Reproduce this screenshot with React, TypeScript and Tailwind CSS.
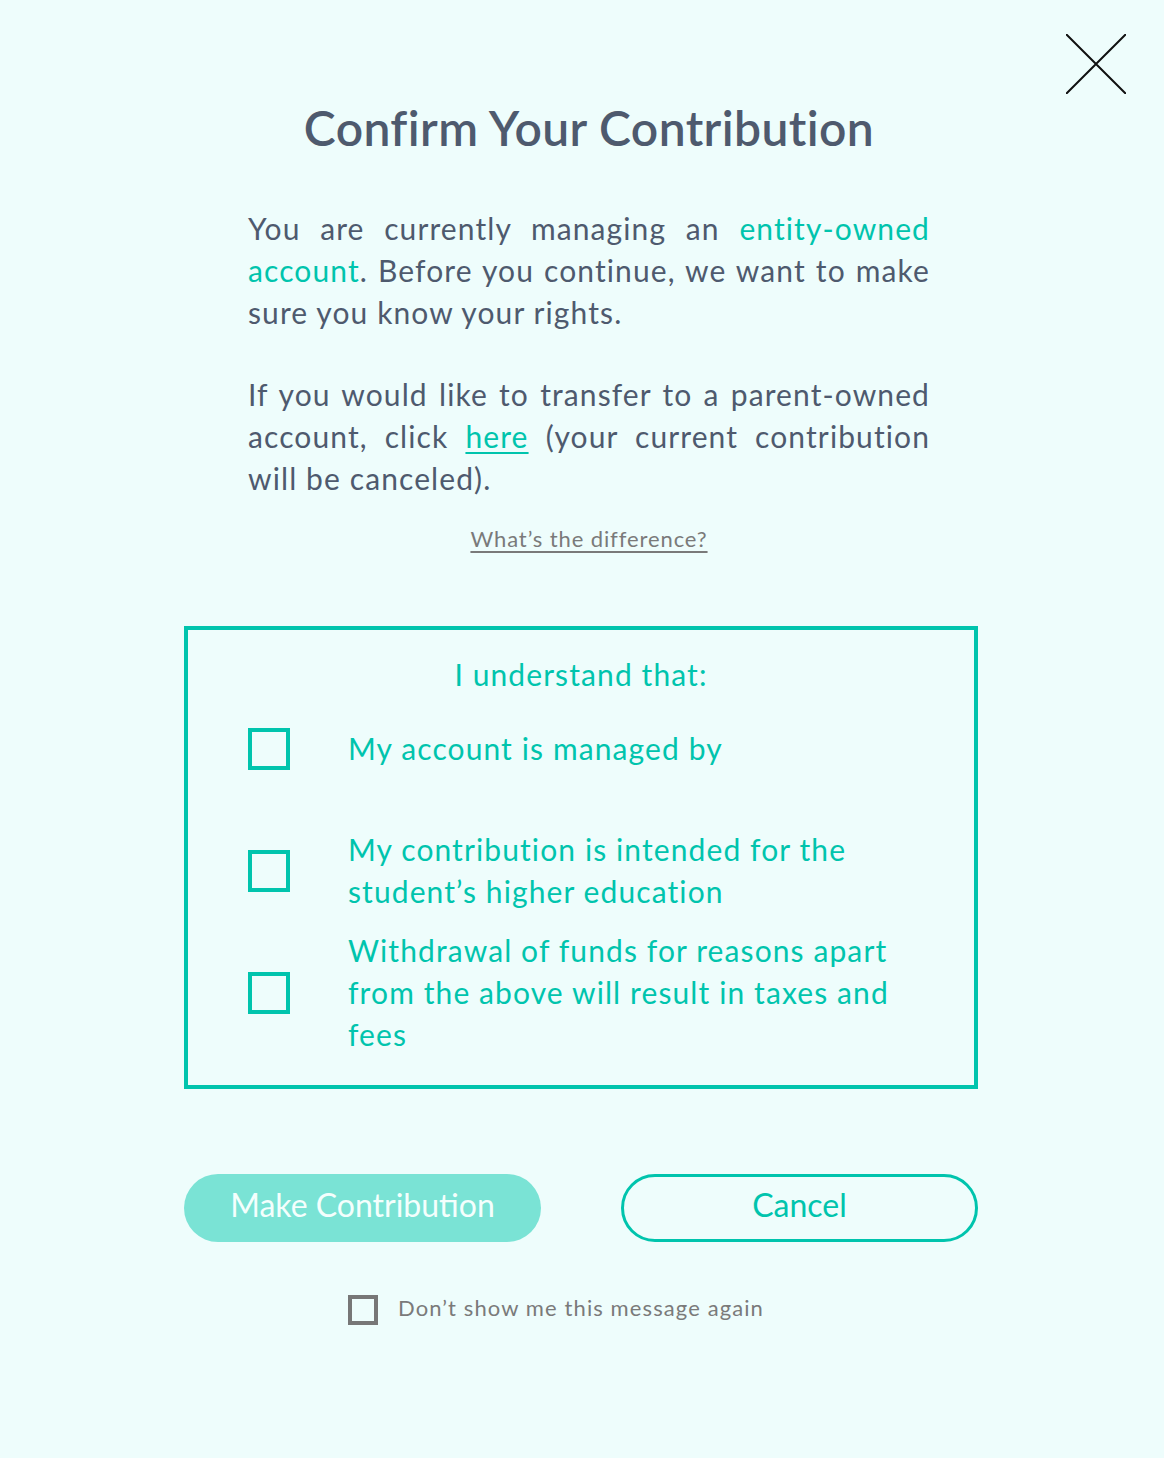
import React from "react";

function Box({ className = "" }: { className?: string }) {
  return <div className={"shrink-0 " + className} />;
}

export default function App() {
  const font = { fontFamily: '"Lato", "Open Sans", sans-serif' };
  return (
    <div className="relative w-full min-h-[1458px] bg-[#eefdfc]" style={font}>
      <button className="absolute top-[34px] right-[38px] w-[60px] h-[60px]" aria-label="Close">
        <svg width="60" height="60" viewBox="0 0 60 60">
          <path d="M0 0 L60 60 M60 0 L0 60" stroke="#111" strokeWidth="2" />
        </svg>
      </button>

      <div className="ml-[184px] w-[794px] pt-[100px]">
        <div className="ml-[64px] w-[682px]">
          <h1 className="text-center text-[48px] leading-[56px] font-semibold tracking-[0.4px] text-[#4e5a6e]">
            Confirm Your Contribution
          </h1>
          <p className="mt-[51px] text-[30px] leading-[42px] tracking-[1.1px] text-[#4e5a6e] text-justify">
            You are currently managing an <span className="text-[#00c4ad]">entity-owned account</span>. Before you continue, we want to make sure you know your rights.
          </p>
          <p className="mt-[40px] text-[30px] leading-[42px] tracking-[1.1px] text-[#4e5a6e] text-justify">
            If you would like to transfer to a parent-owned account, click{" "}
            <a className="text-[#00c4ad] underline underline-offset-4 decoration-2">here</a> (your current contribution will be canceled).
          </p>
          <div className="mt-[25px] text-center">
            <a className="text-[22px] leading-[30px] tracking-[0.9px] text-[#7a7a7a] underline underline-offset-4">
              What’s the difference?
            </a>
          </div>
        </div>

        <div className="mt-[72px] border-[4px] border-[#00c4ad] pt-[30px] pb-[31px] pl-[60px]">
          <div className="text-center text-[30px] leading-[28px] tracking-[1.1px] text-[#00c4ad] -ml-[60px]">I understand that:</div>
          {[
            "My account is managed by",
            "My contribution is intended for the student’s higher education",
            "Withdrawal of funds for reasons apart from the above will result in taxes and fees",
          ].map((t, i) => (
            <div key={i} className="h-[122px] flex items-center">
              <Box className="w-[42px] h-[42px] border-[4px] border-[#00c4ad]" />
              <div className="ml-[58px] mb-[2px] w-[570px] text-[30px] leading-[42px] tracking-[1.1px] text-[#00c4ad]">{t}</div>
            </div>
          ))}
        </div>

        <div className="mt-[85px] flex justify-between">
          <button className="w-[357px] h-[68px] pb-[6px] rounded-full bg-[#7ae3d5] text-[32px] text-[#f4fffd]">
            Make Contribution
          </button>
          <button className="w-[357px] h-[68px] pb-[6px] rounded-full border-[3px] border-[#00c4ad] text-[32px] text-[#00c4ad]">
            Cancel
          </button>
        </div>

        <div className="mt-[51px] ml-[164px] flex items-center">
          <Box className="w-[30px] h-[30px] border-[4px] border-[#777777]" />
          <span className="ml-[20px] mb-[4px] text-[22px] leading-[30px] tracking-[1.1px] text-[#7a7a7a]">Don’t show me this message again</span>
        </div>
      </div>
    </div>
  );
}
